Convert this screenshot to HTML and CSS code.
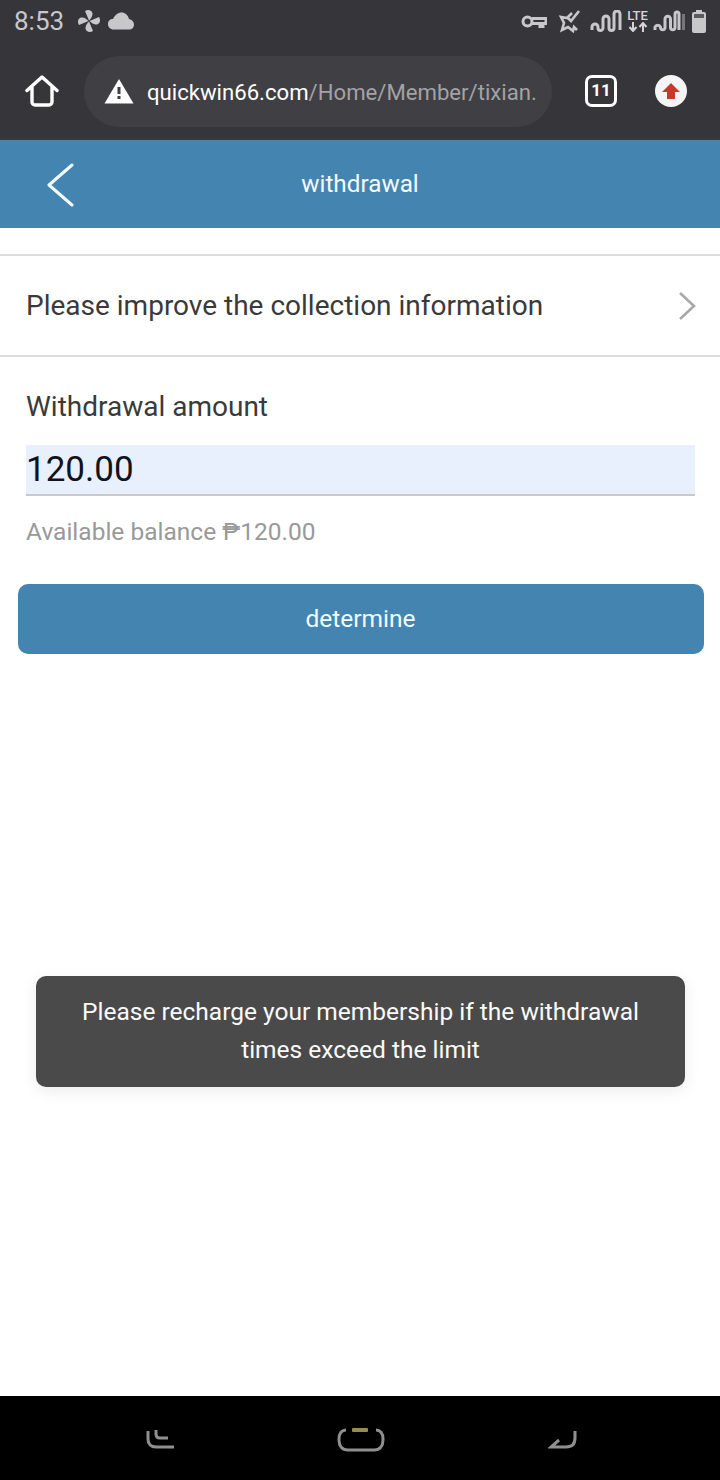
FILE: index.html
```html
<!DOCTYPE html>
<html lang="en">
<head>
    <meta charset="UTF-8">
    <meta name="viewport" content="width=device-width, initial-scale=1.0">
    <title>withdrawal</title>
    <link rel="stylesheet" href="styles.css">
</head>
<body>
    <div class="phone">
        <div class="browser">
            <div class="status-bar">
                <div class="status-left">
                    <span class="clock">8:53</span>
                    <svg class="ico-fan" viewBox="0 0 24 24">
                        <path d="M12 11.500L8 2c3-2 7-1 7.500 2.500.3 2.500-1.500 5-3.500 7z"/>
                        <path transform="rotate(90 12 12)" d="M12 11.500L8 2c3-2 7-1 7.500 2.500.3 2.500-1.500 5-3.500 7z"/>
                        <path transform="rotate(180 12 12)" d="M12 11.500L8 2c3-2 7-1 7.500 2.500.3 2.500-1.500 5-3.500 7z"/>
                        <path transform="rotate(270 12 12)" d="M12 11.500L8 2c3-2 7-1 7.500 2.500.3 2.500-1.500 5-3.500 7z"/>
                    </svg>
                    <svg class="ico-cloud" viewBox="0 0 26 18"><path d="M6 17.500C2 17.500 0 15 0 12c0-3 2-5 5-5C7 3 10 .5 13.500.5 17 .5 20 3 21 7c3 .5 5 3 5 5.500 0 3-2 5-5 5z"/></svg>
                </div>
                <div class="status-right">
                    <svg class="ico-key" viewBox="0 0 26 15"><circle cx="6.500" cy="7.500" r="4.500"/><path d="M11 4.500h14v5h-3v3h-3v-3h-8"/></svg>
                    <svg class="ico-wifi" viewBox="0 0 24 24"><path d="M15 4l-5 5-6-1 3 6-2 7 6-3 5 4 1-4 3 3M22 2l-8 10-3-3"/></svg>
                    <svg class="ico-signal" viewBox="0 0 32 22"><path d="M2 20v-3a3 3 0 0 1 6 0v1a2.500 2.500 0 0 0 5 0V9a3 3 0 0 1 6 0v9a2.500 2.500 0 0 0 5 0V4a3 3 0 0 1 6 0v16"/></svg>
                    <div class="lte">
                        <span class="lte-text">LTE</span>
                        <svg class="ico-arrows" viewBox="0 0 20 10"><path d="M5 0v8M1.500 5L5 9l3.500-4M15 10V2M11.500 5L15 1l3.500 4"/></svg>
                    </div>
                    <svg class="ico-signal ico-signal-2" viewBox="0 0 32 22"><path d="M2 20v-3a3 3 0 0 1 5.500 0v1a2.300 2.300 0 0 0 4.500 0V9a2.700 2.700 0 0 1 5.500 0v9a2.300 2.300 0 0 0 4.500 0V4a2 2 0 0 1 4 0v16"/><path class="dim" d="M30.500 4v16"/></svg>
                    <svg class="ico-battery" viewBox="0 0 14 23"><path d="M4 0h6v2h2a2 2 0 0 1 2 2v17a2 2 0 0 1-2 2H2a2 2 0 0 1-2-2V4a2 2 0 0 1 2-2h2z"/><rect class="batt-empty" x="2" y="4" width="10" height="4"/></svg>
                </div>
            </div>
            <div class="toolbar">
                <svg class="ico-home" viewBox="0 0 34 34"><path d="M2 16.500L17 3l15 13.500M7 13v15a3 3 0 0 0 3 3h14a3 3 0 0 0 3-3V13"/></svg>
                <div class="url-bar">
                    <svg class="ico-warn" viewBox="0 0 30 26"><path class="warn-tri" d="M15 1l14.500 24.500H.5z"/><rect class="warn-mark" x="13.500" y="9" width="3" height="7"/><rect class="warn-mark" x="13.500" y="18" width="3" height="3"/></svg>
                    <div class="url"><span class="url-host">quickwin66.com</span><span class="url-path">/Home/Member/tixian.</span></div>
                </div>
                <div class="tabs">11</div>
                <div class="update">
                    <svg viewBox="0 0 20 20"><path d="M10 2l9 9h-5v7H6v-7H1z"/></svg>
                </div>
            </div>
        </div>

        <header class="page-header">
            <svg class="ico-back" viewBox="0 0 28 44"><path d="M26 2L3 22l23 20"/></svg>
            <h1 class="page-title">withdrawal</h1>
        </header>

        <main class="content">
            <a class="info-row" href="#">
                <span>Please improve the collection information</span>
                <svg class="ico-next" viewBox="0 0 18 30"><path d="M2 2l14 13L2 28"/></svg>
            </a>
            <form class="withdraw-form">
                <label class="amount-label" for="amount">Withdrawal amount</label>
                <input class="amount-input" id="amount" type="text" value="120.00">
                <p class="balance">Available balance ₱120.00</p>
                <button class="submit-btn" type="button">determine</button>
            </form>
        </main>

        <div class="toast">Please recharge your membership if the withdrawal times exceed the limit</div>

        <nav class="nav-bar">
            <svg class="ico-nav-recent" viewBox="0 0 30 24"><path d="M2 3v8c0 5 3 8 8 8h18M10 2v4c0 2 1 4 4 4h8"/></svg>
            <svg class="ico-nav-home" viewBox="0 0 48 28">
                <path d="M9 4C5 4 2 7 2 13v1c0 6 3 10 9 10h26c6 0 9-4 9-10v-1c0-6-3-9-7-9"/>
                <rect class="nav-home-dot" x="15" y="2" width="16" height="4" rx="1"/>
            </svg>
            <svg class="ico-nav-back" viewBox="0 0 30 24"><path d="M27 3v7c0 6-3 9-9 9H3l8-7"/></svg>
        </nav>
    </div>
</body>
</html>
```

FILE: styles.css
```css
* {
    margin: 0;
    padding: 0;
    box-sizing: border-box;
}

body {
    font-family: Roboto, "Liberation Sans", sans-serif;
    background-color: #fff;
}

svg {
    display: block;
    flex-shrink: 0;
}

.phone {
    position: relative;
    display: flex;
    flex-direction: column;
    width: 720px;
    height: 1480px;
    overflow: hidden;
}

/* barra do navegador */
.browser {
    height: 140px;
    background-color: #36363a;
    border-bottom: 2px solid #303e49;
    flex-shrink: 0;
}

.status-bar {
    display: flex;
    justify-content: space-between;
    align-items: center;
    height: 44px;
    padding: 0 14px 2px 14px;
    color: #c8c8ca;
}

.status-left,
.status-right {
    display: flex;
    align-items: center;
}

.clock {
    font-size: 26px;
    margin-right: 13px;
}

.ico-fan {
    width: 24px;
    height: 24px;
    fill: #c8c8ca;
    margin-right: 7px;
}

.ico-cloud {
    width: 26px;
    height: 18px;
    fill: #c8c8ca;
}

.ico-key {
    width: 26px;
    height: 15px;
    margin-right: 10px;
    fill: none;
    stroke: #c8c8ca;
    stroke-width: 3;
}

.ico-wifi {
    width: 24px;
    height: 24px;
    margin-right: 9px;
    fill: none;
    stroke: #c8c8ca;
    stroke-width: 2.6;
}

.ico-signal {
    width: 32px;
    height: 22px;
    fill: none;
    stroke: #c8c8ca;
    stroke-width: 3;
}

.ico-signal-2 {
    margin-right: 7px;
}

.ico-signal-2 .dim {
    stroke: #77777a;
}

.lte {
    display: flex;
    flex-direction: column;
    align-items: center;
    width: 21px;
    margin: 0 5px;
    color: #d4d4d6;
}

.lte-text {
    font-size: 13px;
    font-weight: 500;
    line-height: 12px;
    height: 12px;
}

.ico-arrows {
    width: 20px;
    height: 10px;
    fill: none;
    stroke: #d4d4d6;
    stroke-width: 2;
}

.ico-battery {
    width: 14px;
    height: 23px;
    fill: #c8c8ca;
}

.batt-empty {
    fill: #5b5b5e;
}

.toolbar {
    display: flex;
    align-items: center;
    height: 94px;
    padding-left: 25px;
}

.ico-home {
    width: 34px;
    height: 34px;
    fill: none;
    stroke: #fff;
    stroke-width: 3.4;
    stroke-linecap: round;
    stroke-linejoin: round;
}

.url-bar {
    display: flex;
    align-items: center;
    width: 468px;
    height: 71px;
    margin-left: 25px;
    padding-left: 20px;
    border-radius: 36px;
    background-color: #3f3f44;
}

.ico-warn {
    width: 30px;
    height: 26px;
    margin-right: 13px;
}

.warn-tri {
    fill: #fff;
}

.warn-mark {
    fill: #3f3f44;
}

.url {
    padding-top: 2px;
    font-size: 22.150px;
    white-space: nowrap;
}

.url-host {
    color: #fff;
}

.url-path {
    color: #a3a3a6;
}

.tabs {
    width: 32px;
    height: 32px;
    margin-left: 33px;
    border: 3.500px solid #fff;
    border-radius: 7px;
    color: #fff;
    font-size: 17px;
    font-weight: 700;
    line-height: 25px;
    text-align: center;
}

.update {
    display: flex;
    align-items: center;
    justify-content: center;
    width: 32px;
    height: 32px;
    margin-left: 38px;
    border-radius: 50%;
    background-color: #f5f5f5;
}

.update svg {
    width: 20px;
    height: 20px;
    fill: #c8392b;
}

/* cabecalho da pagina */
.page-header {
    position: relative;
    display: flex;
    align-items: center;
    justify-content: center;
    height: 88px;
    flex-shrink: 0;
    background-color: #4484b1;
    border-top: 1px solid #5f7f96;
}

.ico-back {
    position: absolute;
    left: 46px;
    top: 22px;
    width: 28px;
    height: 44px;
    fill: none;
    stroke: #f2fbff;
    stroke-width: 3;
    stroke-linecap: round;
    stroke-linejoin: round;
}

.page-title {
    color: #f2fbff;
    font-size: 24.300px;
    font-weight: 400;
    padding-bottom: 2px;
}

.content {
    flex: 1;
    padding-top: 26px;
}

.info-row {
    display: flex;
    align-items: center;
    justify-content: space-between;
    height: 103px;
    padding: 0 24px 0 26px;
    border-top: 2px solid #dcdcdc;
    border-bottom: 2px solid #dcdcdc;
    color: #3a3a3a;
    font-size: 28px;
    text-decoration: none;
}

.ico-next {
    width: 18px;
    height: 30px;
    fill: none;
    stroke: #a8a8a8;
    stroke-width: 2.6;
}

.withdraw-form {
    padding: 0 16px 0 18px;
}

.amount-label {
    display: block;
    margin: 34px 0 22px 8px;
    color: #3a3a3a;
    font-size: 28px;
    line-height: 32px;
}

.amount-input {
    display: block;
    width: 669px;
    height: 51px;
    margin-left: 8px;
    border: none;
    border-bottom: 2px solid #c9c9cc;
    border-radius: 0;
    background-color: #e8f0fd;
    color: #10131c;
    font-family: inherit;
    font-size: 35px;
    outline: none;
}

.balance {
    margin: 21px 0 37px 8px;
    color: #999;
    font-size: 24.500px;
    line-height: 30px;
}

.submit-btn {
    display: block;
    width: 686px;
    height: 70px;
    padding: 0 1px 2px 0;
    border: none;
    border-radius: 10px;
    background-color: #4484b1;
    color: #f2fbff;
    font-family: inherit;
    font-size: 24.500px;
}

/* aviso flutuante */
.toast {
    position: absolute;
    left: 36px;
    top: 976px;
    width: 649px;
    height: 111px;
    padding: 17px 30px 0;
    border-radius: 10px;
    background-color: #4a4a4a;
    box-shadow: 0 4px 16px rgba(0, 0, 0, 0.08);
    color: #fafafa;
    font-size: 24.500px;
    line-height: 38px;
    text-align: center;
}

/* navegacao do android */
.nav-bar {
    position: relative;
    display: flex;
    align-items: center;
    height: 84px;
    flex-shrink: 0;
    padding: 4px 142px 0 146px;
    justify-content: space-between;
    background-color: #000;
}

.nav-bar svg {
    fill: none;
    stroke: #8f8f8f;
    stroke-width: 3;
}

.ico-nav-recent,
.ico-nav-back {
    width: 30px;
    height: 24px;
}

.ico-nav-home {
    width: 48px;
    height: 28px;
    margin-left: -2px;
}

.nav-bar .nav-home-dot {
    fill: #968c58;
    stroke: none;
}
```
